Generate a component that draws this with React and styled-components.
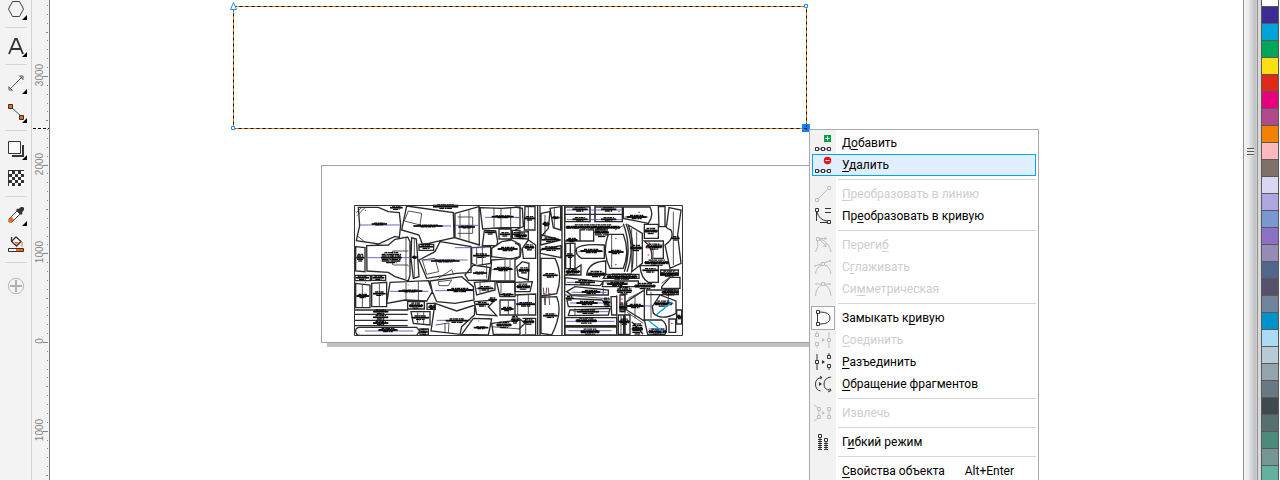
import React from "react";
import styled, { createGlobalStyle } from "styled-components";

const TOOLS = [
  [{ id: "polygon", label: "Многоугольник", more: true }],
  [{ id: "text", label: "Текст", more: true }],
  [
    { id: "dimension", label: "Размерная линия", more: true },
    { id: "connector", label: "Соединительная линия", more: true },
  ],
  [
    { id: "shadow", label: "Тень", more: true },
    { id: "transparency", label: "Прозрачность" },
  ],
  [
    { id: "dropper", label: "Пипетка", more: true },
    { id: "fill", label: "Интерактивная заливка" },
  ],
  [{ id: "add", label: "Добавить инструмент", tall: true }],
];

const MENU = [
  [
    { icon: "add", text: ["Д", "о", "бавить"] },
    { icon: "remove", text: ["", "У", "далить"], active: true },
  ],
  [
    { icon: "toLine", text: ["", "П", "реобразовать в линию"], disabled: true },
    { icon: "toCurve", text: ["Пр", "е", "образовать в кривую"] },
  ],
  [
    { icon: "cusp", text: ["Переги", "б", ""], disabled: true },
    { icon: "smooth", text: ["С", "г", "лаживать"], disabled: true },
    { icon: "symmetric", text: ["Си", "м", "метрическая"], disabled: true },
  ],
  [
    { icon: "close", text: ["Замыкать к", "р", "ивую"], checked: true },
    { icon: "join", text: ["", "С", "оединить"], disabled: true },
    { icon: "split", text: ["", "Р", "азъединить"] },
    { icon: "reverse", text: ["", "О", "бращение фрагментов"] },
  ],
  [{ icon: "extract", text: ["Извлечь", "", ""], disabled: true }],
  [{ icon: "elastic", text: ["Г", "и", "бкий режим"] }],
  [{ text: ["", "С", "войства объекта"], shortcut: "Alt+Enter" }],
];

const COLORS = [
  "#ffffff", "#3d2b94", "#00a3d9", "#00a65a", "#fae013", "#e1291b", "#e6007e",
  "#b14a8b", "#f08200", "#ffb9be", "#80706a", "#d8d6f2", "#aea6e0", "#7a97d2",
  "#8b70c6", "#958bb5", "#52668d", "#57506b", "#70849b", "#0092cd", "#acdaf4",
  "#b8cad6", "#93a4ad", "#6a7981", "#40494d", "#547070", "#4c8a7b", "#759695",
  "#63b1a0",
];

const RULER_LABELS = [
  { y: 76, text: "3000" },
  { y: 165, text: "2000" },
  { y: 253, text: "1000" },
  { y: 342, text: "0" },
  { y: 431, text: "1000" },
];

// one tick per hundred units, counted from the zero mark
const RULER_TICKS = Array.from({ length: 54 }, (_, i) => {
  const n = i - 38;
  return {
    y: Math.round(342 + n * 8.87),
    length: n % 10 === 0 ? 5 : n % 5 === 0 ? 2 : 1,
  };
});

/* ---------- icons ---------- */

function ToolIcon({ id }) {
  switch (id) {
    case "polygon":
      return <path d="M4.500 .500h7l4 7.500-4 7.500h-7L.500 8z" fill="none" stroke="#444" />;
    case "text":
      return <path d="M1 16 7.300 1h1.400L15 16M3.200 11h9.600" fill="none" stroke="#333" strokeWidth="1.900" />;
    case "dimension":
      return <path d="M2 14 14 2M.500 11.500l4 4M11 .500l4.500 4.500M1 12v3h3M12 1h3v3" fill="none" stroke="#555" />;
    case "connector":
      return (
        <>
          <path d="M3 3 14 13" stroke="#555" />
          <path d="M.500.500h4v4h-4zM11.500 11.500h4v4h-4z" fill="#ff6600" stroke="#333" />
        </>
      );
    case "shadow":
      return (
        <>
          <path d="M14 4h2v12H4v-2h10z" fill="#333" />
          <path d="M.500.500h12v12H.500z" fill="#fafafa" stroke="#333" />
        </>
      );
    case "transparency":
      return (
        <>
          <path d="M0 0h16v16H0z" fill="#333" />
          {[0, 1, 2, 3, 4].map((r) =>
            [0, 1, 2, 3, 4].map((c) =>
              (r + c) % 2 === 0 ? <rect key={`${r}${c}`} x={1 + c * 3} y={1 + r * 3} width="3" height="3" fill="#fff" /> : null
            )
          )}
        </>
      );
    case "dropper":
      return (
        <>
          <path d="M1 15v-3l8-8 3 3-8 8z" fill="#fff" stroke="#444" />
          <path d="M1 15v-2.500l2.500-2.500 2.500 2.500L3.500 15z" fill="#ff6600" />
          <path d="m8 3 5 5 1.500-1.500L14 5.500 16 3V1l-1-1h-2l-2.500 2L9.500 1.500z" fill="#333" />
        </>
      );
    case "fill":
      return (
        <>
          <path d="M3.500 5.500 8 1l5 4.500L8.500 10 3.500 5.500V1" fill="#fff" stroke="#333" strokeWidth="1.300" />
          <path d="M6 6h5L8.500 8.500z" fill="#ff6600" />
          <path d="M14 6v5" stroke="#ff8a40" strokeWidth="1.300" />
          <path d="M.500 12.500h15v3H.500z" fill="#fff" stroke="#333" />
          <path d="M8 13h7v2H8z" fill="#ff6600" />
        </>
      );
    default:
      return (
        <>
          <circle cx="8" cy="8" r="7.700" fill="none" stroke="#b5b5b5" />
          <path d="M8 2v12M2 8h12" stroke="#b0b0b0" strokeWidth="2" />
        </>
      );
  }
}

const CHAIN = "M1.500 15.500h3v3h-3zM7.500 15.500h3v3h-3zM13.500 15.500h3v3h-3zM5 17h2M11 17h2";

const MENU_PATHS = {
  add: CHAIN,
  remove: CHAIN,
  toLine: "M1.500 15.500h3v3h-3zM13.500 3.500h3v3h-3zM5 15 13 7",
  toCurve: "M1.500 3.500h3v3h-3zM13.500 15.500h3v3h-3zM2.500 7v9M3 7q2 8 10 9M6 17.500h7M11 3.500h6M11 7.500h6",
  cusp: "M1.500 18Q5 13 3.500 7M2.500 3.500h3v3h-3zM6 5q9 3 11 13M6 4.500h7M6 6l6 6M11 3v3M9 12l3 .500V9",
  smooth: "M1.500 18Q2 11 8 9M11 9q5 2 6 9M7.500 6.500h3v3h-3zM1 10l6-2M11 6.500l6-2M1 9v2M16 4v2",
  symmetric: "M1.500 18Q2 9 8 7M11 7q5 2 6 11M7.500 4.500h3v3h-3zM2 6h5M11 6h5M2 5v2M16 5v2",
  close: "M2.500 3.500h3v3h-3zM2.500 15.500h3v3h-3zM3.500 7v8M6 5q10 0 10 6t-10 6",
  join: "M1.500 4.500h3v3h-3zM1.500 13.500h3v3h-3zM3 2v2M3 17v2M13.500 9.500h3v3h-3zM15 3v6M15 13v6",
  split: "M1.500 9.500h3v3h-3zM3 3v6M3 13v6M13.500 4.500h3v3h-3zM13.500 13.500h3v3h-3zM15 2v2M15 17v2",
  reverse: "M8 4.500Q1.500 5 1.500 11t5 7M6 3l2 1.500L6 6M17 4q-7 1-7 7t6 6M14 19l3-1.500-1-2",
  extract: "M3.500 5.500h3v3h-3zM3.500 13.500h3v3h-3zM5 9v4M0 3l4 3M0 19l4-3M13.500 5.500h3v3h-3zM13.500 13.500h3v3h-3zM15 9v4",
  elastic: "M4.500 3.500h3v3h-3zM10.500 7.500h3v3h-3zM4 8.500h4M4 10.500h4M4 12.500h4M4 14.500h4M4 16.500h4M4 18.500h4M10 12.500h4M10 14.500h4M10 16.500h4M10 18.500h4M6 7v12M12 11v8",
};

function MenuIcon({ id, disabled }) {
  const ink = disabled ? "#bdbdbd" : "#333";
  return (
    <svg width="18" height="22" viewBox="0 0 18 22" aria-hidden="true">
      {id === "add" && (
        <>
          <path d="M10 3h7v7h-7z" fill="#00a33b" />
          <path d="M13.500 4.500v4M11.500 6.500h4" stroke="#fff" />
        </>
      )}
      {id === "remove" && (
        <>
          <circle cx="13.500" cy="6.500" r="3.700" fill="#f20d0d" />
          <path d="M11.500 6.500h4" stroke="#fff" />
        </>
      )}
      {["join", "split", "extract"].includes(id) && <path d="m8 9 3 2-3 2z" fill={ink} />}
      {id === "reverse" && <path d="m5 9 3 2-3 2z" fill={ink} />}
      <path d={MENU_PATHS[id]} fill="none" stroke={ink} />
    </svg>
  );
}

/* ---------- cutting layout: outlines, inner seams, captions ---------- */

const LEFT_OUTLINES = [
  "M40 37H100L130 50 163 53 167 90 163 127 150 124 100 147 75 143 34 137 44 92z",
  "M185 33 325 53 327 128 250 145 232 147 222 120 170 105z",
  "M330 55 402 35 403 150 330 128z",
  "M405 38 470 40 525 36V98H470L413 102z",
  "M418 107H452L458 140 455 152H412z",
  "M462 102h36v30h-36zM502 106h23v24h-23z",
  "M440 160 470 140 500 135 525 148V185L500 192 440 185z",
  "M65 152 130 150 150 133 188 126 195 140V240L190 258 150 245 130 232 66 228z",
  "M32 155 60 158V230L32 228z",
  "M200 128 214 132 222 245 205 250 198 190z",
  "M222 148h44v18h-44z",
  "M285 140 378 155V232L335 235 245 250 222 195 270 170z",
  "M380 158 437 155V205L395 212 380 205z",
  "M360 240 385 210 435 218 430 255 370 256z",
  "M440 195 510 190V258H435z",
  "M30 241h46v16H30zM80 241h42v15H80z",
  "M32 265 75 270V338H32zM80 265 125 262V335H80z",
  "M135 262 250 257 262 290 245 318 180 315 125 325z",
  "M255 258 350 245 385 275 387 315 330 325 275 320 262 290z",
  "M388 262 450 258V285L395 300z",
  "M455 262H510V305H465z",
  "M388 320 450 315 430 335 455 362 395 358z",
  "M465 315h45v45h-45z",
  "M188 320h50v22h-50zM246 325h25v18h-25z",
  "M28 345H190M28 358H188M28 376H188M28 392H188",
  "M32 408Q32 397 45 397H215L224 408 215 421H45Q32 421 32 408z",
  "M198 350H255V390L205 385z",
  "M270 325 335 348 390 330 388 360 350 395 345 418 258 408z",
  "M350 418 385 370 440 372 430 420z",
  "M440 385 525 375V418H445z",
  "M225 402h25v18h-25z",
];

const LEFT_SEAMS =
  "M36 62 60 38M34 52 50 38M36 122 62 143M190 48 230 55 225 90 178 78zM338 66H383V115H338M345 56V128M372 45V140M447 38V98M468 40V98M497 38V98M143 168V210M143 168H190M145 210H190M183 128V252M208 132V248M232 195 270 190 281 230 245 238zM395 158V208M412 158V208M480 195V256M495 195V256M52 270V336M103 266V334M183 262V316M220 260V316M280 260 320 255 310 272H282zM280 250 320 224 326 238M218 352V388M236 352V388M272 390 312 384 310 414M300 385V414M440 395 525 402M425 210V250M468 262V300M490 318V358M405 262V294";

const RIGHT_OUTLINES = [
  "M0 36 22 40 25 95 0 105M30 35H60V105H28z",
  "M0 112 40 110V132L0 130M0 145Q25 150 15 185L0 195M22 160 40 135 62 150V190H25z",
  "M5 215 22 200 42 205 40 255 10 245z",
  "M0 262 52 260 45 290H0zM0 300 62 297V360H0M22 370H62V420H20M0 375 12 370 30 385 12 402",
  "M68 32V422M75 32V422M141 32V422M149 32V422",
  "M78 55 105 50 100 100 78 125zM105 40 137 35V105L115 98z",
  "M80 120 137 135 76 150zM76 165 138 152V188L76 175z",
  "M78 190 120 190Q145 240 125 296L100 300 78 303z",
  "M78 307 125 305Q145 350 110 420L78 415z",
  "M150 36h75v44h-75zM240 36h82v44h-82zM150 58h172",
  "M325 36H405Q418 60 400 85L325 70z",
  "M430 35H450V95H432z",
  "M462 38 498 45 488 120 498 205 465 220 450 150Q480 130 468 105 450 100 455 90z",
  "M280 118H325Q345 170 325 220H285Q260 170 280 118z",
  "M340 90 382 115V205L350 230Q362 150 340 90z",
  "M325 86Q352 160 328 230M333 86Q362 160 336 230",
  "M388 88h42v42h-42zM388 138H445V190H410Q415 160 388 138z",
  "M152 145h28v76h-28zM166 145v76M195 105v33M150 138h86v-33",
  "M185 160Q200 145 268 150V190H200Q180 180 185 160z",
  "M215 240Q220 200 272 198V240zM152 240 198 210V240z",
  "M375 212H430V262H400Q378 250 375 212z",
  "M437 225h53v16h-53zM440 275 465 247H495V280H440z",
  "M150 248 265 260 255 272 150 268zM155 290 180 275 280 285V300L170 300z",
  "M155 310 260 315 285 335 160 335zM165 345 285 340 280 360 160 362z",
  "M150 368h155v24H150zM150 396h155v24H150z",
  "M265 258H370V275H262zM272 238H372V250H265z",
  "M288 305H305V360H290zM315 300H330V350H315z",
  "M335 320 388 285V378L335 345z",
  "M310 360h16v58h-16zM330 360h15v58h-15z",
  "M412 335 435 300 483 318V355Q440 378 415 355z",
  "M388 375H440Q462 390 450 418H398z",
  "M462 372h20v40h-20zM485 345h15v42h-15zM350 380l18 18 16 20",
  "M395 285h95v14h-95z",
];

const RIGHT_SEAMS =
  "M40 36V104M30 70H60M90 60V120M118 40V100M85 278 90 330 95 278M100 278 104 330M40 298V358M8 298V358M32 372V418M225 32V82M240 32V82M400 140Q425 165 408 205M420 150H445M350 100V220M365 110V215M300 105 325 92M340 310 385 288M337 352 385 385M180 340V362M265 280V300M150 300 285 312M440 265 462 248M330 300V420M305 300V420M360 300V370M408 290V370M318 360V418M475 50V210M290 120V218M460 280V330";

// [x, y, width, rows]
const LEFT_CAPTIONS = [
  [80, 87, 46, 2], [205, 93, 88, 2], [135, 38, 38, 3], [264, 35, 76, 3], [340, 96, 50, 2],
  [440, 65, 66, 2], [420, 112, 32, 3], [464, 118, 32, 3], [502, 118, 22, 3], [458, 162, 60, 3],
  [108, 188, 62, 7], [200, 187, 18, 2], [222, 155, 42, 3], [258, 198, 86, 2], [384, 182, 50, 3],
  [384, 234, 42, 2], [446, 222, 56, 3], [32, 248, 40, 3], [82, 248, 36, 3], [34, 188, 24, 5],
  [34, 303, 38, 3], [84, 296, 38, 3], [160, 288, 72, 2], [306, 285, 78, 3], [398, 280, 46, 3],
  [466, 299, 40, 2], [392, 328, 40, 3], [468, 342, 38, 3], [192, 332, 42, 4], [250, 336, 20, 3],
  [84, 350, 46, 3], [84, 367, 46, 3], [84, 384, 46, 3], [100, 405, 58, 3], [200, 368, 52, 3],
  [302, 377, 68, 3], [386, 398, 44, 2], [454, 390, 46, 4], [226, 411, 22, 4], [498, 374, 24, 5],
  [430, 314, 26, 3],
];

const RIGHT_CAPTIONS = [
  [28, 70, 32, 3], [2, 122, 34, 4], [82, 87, 22, 3], [110, 68, 24, 2], [80, 134, 52, 3],
  [80, 161, 56, 3], [84, 241, 44, 3], [84, 362, 44, 3], [28, 157, 30, 4], [10, 226, 34, 4],
  [4, 275, 42, 4], [4, 328, 56, 3], [24, 380, 34, 4], [172, 43, 46, 3], [258, 43, 46, 3],
  [172, 73, 46, 3], [258, 73, 46, 3], [152, 97, 164, 4], [238, 112, 44, 6], [154, 135, 34, 3],
  [335, 66, 60, 3], [196, 168, 66, 3], [218, 237, 52, 4], [280, 171, 46, 3], [345, 159, 36, 4],
  [388, 108, 40, 4], [392, 155, 50, 4], [388, 203, 74, 4], [382, 226, 48, 3], [436, 236, 54, 4],
  [470, 130, 24, 3], [152, 182, 26, 3], [152, 230, 44, 4], [180, 262, 60, 3], [200, 291, 56, 3],
  [184, 324, 64, 3], [186, 350, 66, 3], [182, 377, 64, 4], [196, 410, 58, 4], [275, 245, 92, 4],
  [276, 267, 62, 3], [305, 287, 46, 5], [358, 273, 64, 4], [440, 292, 50, 4], [336, 333, 50, 3],
  [312, 337, 22, 6], [418, 326, 54, 4], [400, 410, 56, 4], [484, 366, 18, 3], [312, 380, 32, 4],
  [350, 402, 34, 7], [264, 322, 22, 6], [152, 310, 24, 3],
];

const LEFT_GRAIN = "M45 90H165M208 93H318M264 30H340M330 91H400M420 67H522M68 188H195M230 195H368M440 224H505M135 289H250M270 287H385M390 281H450M60 408H205M275 376H380M34 303H74M330 158H420";
const RIGHT_GRAIN = "M0 68H18M155 45H320M155 74H320M328 66H400M190 170H265M155 262H240M170 292H275M165 324H280M175 350H282M155 379H298M160 407H290M335 333H410M392 158H440M82 241H130M0 325H60M420 325H475M400 402H450M272 264H340M28 72H62";
const LEFT_PINS = "M60 46h3M100 147h3M147 170h3M188 213h3M465 60h3M495 70h3M218 285h3M188 270h3M60 262h3M395 212h3M480 300h3M222 375h3M400 378h3M470 382h3M385 340h3M350 246h3M172 126h3";
const RIGHT_PINS = "M310 50h5M300 130h5M300 209h5M330 208h5M395 157h5M398 180h5M318 312h5M318 324h5M85 296h5M102 296h5M468 385h5M370 52h5M262 297h5M172 345h5M412 190h5";

function Sheet({ x, y, outlines, seams, captions, grain, pins }) {
  return (
    <g transform={`translate(${x} ${y}) scale(0.33333)`} fill="none">
      <path d={outlines.join("")} stroke="#2a2a2a" strokeWidth="4" />
      <path d={seams} stroke="#333" strokeWidth="2.500" />
      <path d={grain} stroke="#5048b8" strokeWidth="2.500" />
      {captions.map(([cx, cy, w, rows]) => (
        <g key={`${cx}-${cy}`} stroke="#0c0c0c" strokeWidth="4">
          {Array.from({ length: rows }, (_, i) => {
            const inset = i === 0 ? w / 6 : i === rows - 1 ? w / 4 : 2;
            const top = cy + (i - (rows - 1) / 2) * 5;
            return <path key={i} d={`M${cx + inset} ${top}h${w - inset * 2}`} strokeDasharray={`${9 + i * 3} 2 5 1`} />;
          })}
          <path d={`M${cx} ${cy}h${w}`} strokeWidth="5" />
        </g>
      ))}
      <path d={pins} stroke="#e01880" strokeWidth="3" />
    </g>
  );
}

function Drawing() {
  return (
    <CanvasArt aria-label="Рабочая область">
      <rect x="277" y="343" width="573" height="4" fill="#c0c0c0" />
      <rect x="271.500" y="165.500" width="573" height="177" fill="#fff" stroke="#a2a2a2" />
      <Sheet x={295} y={195} outlines={LEFT_OUTLINES} seams={LEFT_SEAMS} captions={LEFT_CAPTIONS} grain={LEFT_GRAIN} pins={LEFT_PINS} />
      <Sheet x={465} y={195} outlines={RIGHT_OUTLINES} seams={RIGHT_SEAMS} captions={RIGHT_CAPTIONS} grain={RIGHT_GRAIN} pins={RIGHT_PINS} />
      <path d="M304.500 335.500V205.500H632.500V335.500z" fill="none" stroke="#333" />
      <path d="m606 315 16-13M599 321l14 11" stroke="#00a6e0" strokeWidth="1.400" />
      <rect x="183.500" y="6.500" width="573" height="122" fill="none" stroke="#f57a14" />
      <rect x="183.500" y="6.500" width="573" height="122" fill="none" stroke="#111" strokeDasharray="3 3" />
      <path d="m183.500 2.500 3 7h-6z" fill="#fff" stroke="#1e8fff" />
      <path d="M754.500 4.500h3v3h-3zM181.500 126.500h3v3h-3z" fill="#fff" stroke="#1e8fff" />
      <rect x="752" y="124" width="8" height="8" fill="#0a84ff" />
      <path d="M754 128.500h3M756.500 125v5" stroke="#222" strokeDasharray="2 1" />
    </CanvasArt>
  );
}

function Ruler() {
  return (
    <RulerBar>
      <svg width="17" height="100%" aria-hidden="true">
        {RULER_TICKS.map(({ y, length }) => (
          <rect key={y} x={16 - length} y={y} width={length} height="1" fill="#858585" />
        ))}
        {RULER_LABELS.map(({ y, text }) => (
          <RulerText key={y} transform={`translate(11 ${y - 1}) rotate(-90)`} textAnchor="middle">
            {text}
          </RulerText>
        ))}
        <path d="M1 128.500h16" stroke="#000" strokeDasharray="3 2" />
      </svg>
    </RulerBar>
  );
}

function App() {
  return (
    <Workspace>
      <GlobalStyle />
      <Toolbox aria-label="Набор инструментов">
        {TOOLS.map((group, i) => (
          <React.Fragment key={i}>
            {i > 0 && <ToolDivider />}
            {group.map(({ id, label, more, tall }) => (
              <ToolButton key={id} type="button" aria-label={label} $tall={tall}>
                <svg width="16" height="16" viewBox="0 0 16 16" overflow="visible" aria-hidden="true">
                  <ToolIcon id={id} />
                  {more && <path d="M19 14v5h-5z" fill="#000" />}
                </svg>
              </ToolButton>
            ))}
          </React.Fragment>
        ))}
      </Toolbox>
      <Ruler />
      <Canvas>
        <Drawing />
        <ContextMenu role="menu">
          {MENU.map((group, i) => (
            <React.Fragment key={i}>
              {i > 0 && <MenuDivider />}
              {group.map(({ icon, text, active, checked, disabled, shortcut }) => (
                <MenuItem key={text.join("")} type="button" role="menuitem" disabled={disabled} $active={active}>
                  <IconCell $checked={checked}>{icon && <MenuIcon id={icon} disabled={disabled} />}</IconCell>
                  <span>
                    {text[0]}
                    <u>{text[1]}</u>
                    {text[2]}
                  </span>
                  {shortcut && <Shortcut>{shortcut}</Shortcut>}
                </MenuItem>
              ))}
            </React.Fragment>
          ))}
        </ContextMenu>
      </Canvas>
      <Scrollbar>
        <Grip aria-hidden="true" />
      </Scrollbar>
      <Palette aria-label="Цветовая палитра">
        {COLORS.map((color) => (
          <Swatch key={color} type="button" aria-label={color} $color={color} />
        ))}
      </Palette>
    </Workspace>
  );
}

export default App;

const GlobalStyle = createGlobalStyle`
  body {
    margin: 0;
    background: #fff;
  }

  * {
    box-sizing: border-box;
  }
`;

const Workspace = styled.div`
  display: flex;
  height: 100vh;
  overflow: hidden;
  font-family: Roboto, "Noto Sans", sans-serif;
  font-size: 12px;
`;

const Toolbox = styled.nav`
  display: flex;
  flex-direction: column;
  flex: none;
  width: 32px;
  margin-top: -6px;
  background: #f3f3f3;
  border-right: 1px solid #d2d2d2;
`;

const ToolButton = styled.button`
  display: flex;
  align-items: center;
  flex: none;
  height: ${(props) => (props.$tall ? "40px" : "29px")};
  padding: 0 8px;
  border: 0;
  background: none;
`;

const ToolDivider = styled.div`
  flex: none;
  height: 1px;
  margin: 4px 4px 3px 5px;
  background: #d6d6d6;
`;

const RulerBar = styled.div`
  flex: none;
  width: 18px;
  background: #f3f3f3;
  border-right: 1px solid #7d7d7d;
`;

const RulerText = styled.text`
  font-family: "Liberation Sans", sans-serif;
  font-size: 10px;
  fill: #858585;
`;

const Canvas = styled.main`
  position: relative;
  flex: 1;
  min-width: 0;
  overflow: hidden;
`;

const CanvasArt = styled.svg`
  display: block;
  width: 100%;
  height: 100%;
`;

const ContextMenu = styled.div`
  position: absolute;
  top: 129px;
  left: 759px;
  width: 230px;
  padding: 2px;
  border: 1px solid #a9a9ab;
  background: linear-gradient(to right, #f2f2f2 26px, #fff 26px);
`;

const MenuItem = styled.button`
  display: flex;
  align-items: center;
  width: 100%;
  height: 22px;
  padding: 0 22px 0 0;
  border: 0;
  background: ${(props) => (props.$active ? "#e0efff" : "none")};
  box-shadow: ${(props) => (props.$active ? "inset 0 0 0 1px #00a2f2" : "none")};
  color: #000;
  font: inherit;
  line-height: 18px;
  text-align: left;
  white-space: nowrap;

  &:disabled {
    color: #cdcdcd;
  }

  u {
    text-underline-offset: 2px;
  }
`;

const IconCell = styled.span`
  display: flex;
  align-items: center;
  justify-content: center;
  flex: none;
  width: 24px;
  height: 24px;
  margin: -1px 7px -1px -1px;
  border: 1px solid ${(props) => (props.$checked ? "#a9a9ab" : "transparent")};
  background: ${(props) => (props.$checked ? "#fafafa" : "none")};
`;

const Shortcut = styled.span`
  margin-left: auto;
`;

const MenuDivider = styled.div`
  height: 1px;
  margin: 3px 0 3px 26px;
  background: #d5d5d5;
`;

const Scrollbar = styled.div`
  display: flex;
  justify-content: center;
  flex: none;
  width: 15px;
  border: solid #929292;
  border-width: 0 1px;
  background: linear-gradient(to right, #f4f4f4, #e9e9e9 35%, #bfc0c2 85%, #d0d0d0);
`;

const Grip = styled.span`
  width: 7px;
  height: 8px;
  margin-top: 148px;
  background: repeating-linear-gradient(#555 0 1px, #e8e8e8 1px 3px);
`;

const Palette = styled.aside`
  display: flex;
  flex-direction: column;
  flex: none;
  width: 22px;
  margin-top: -10px;
  padding: 0 1px 0 3px;
  background: linear-gradient(to right, #d9d9d9 3px, #fff 3px);
`;

const Swatch = styled.button`
  flex: none;
  height: 17px;
  padding: 0;
  border: solid #595959;
  border-width: 0 1px 1px;
  background: ${(props) => props.$color};
`;
